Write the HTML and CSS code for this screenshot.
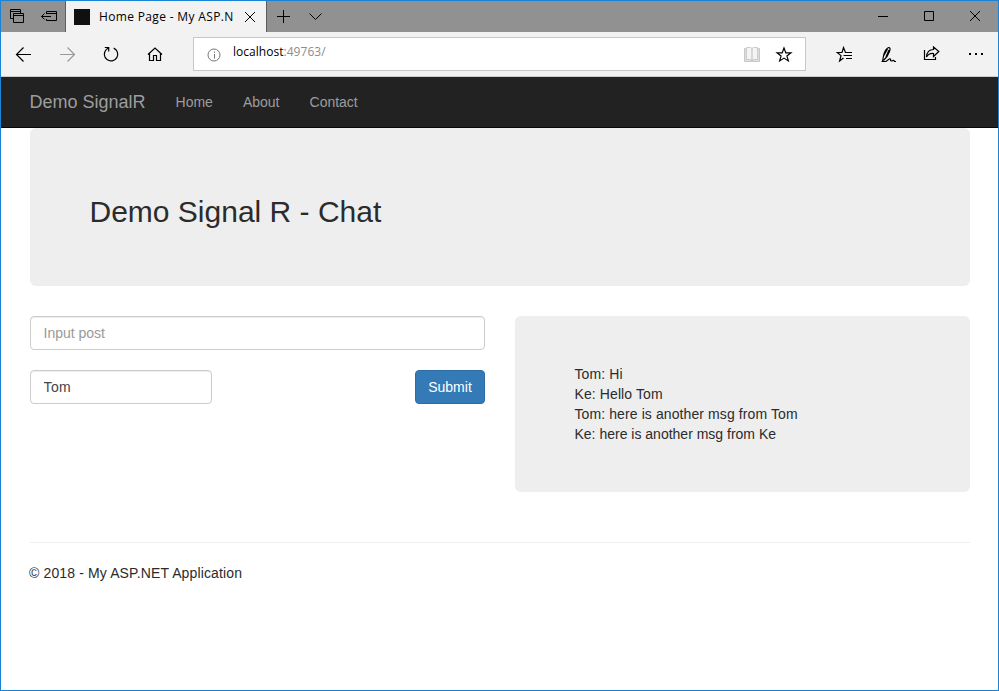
FILE: index.html
```html
<!DOCTYPE html>
<html lang="en">
<head>
<meta charset="utf-8">
<title>Home Page - My ASP.NET Application</title>
<link rel="stylesheet" href="styles.css">
</head>
<body>
<div class="window">
  <div class="titlebar">
    <div class="cell-small"><svg width="32" height="31" viewBox="1 1 32 31"><path d="M13 18.500H10.500V9.500H20.500V13M10.500 11.500H20.500M13.500 13.500H23.500V22.500H13.500ZM13.500 15.500H23.500"/></svg></div>
    <div class="cell-small"><svg width="32" height="31" viewBox="33 1 32 31"><path d="M46.500 14V11.500H56.500V20.500H46.500V19M46.500 13.500H56.500M41.500 16.500H51M44.500 13.500L41.500 16.500L44.500 19.500"/></svg></div>
    <div class="tab">
      <span class="favicon"></span>
      <span class="tab-title">Home Page - My ASP.N</span>
      <svg class="tab-close" width="12" height="12" viewBox="244 10 12 12"><path d="M245 11L255 21M255 11L245 21"/></svg>
    </div>
    <div class="cell-small"><svg width="32" height="31" viewBox="267 1 32 31"><path d="M277 16.500H290M283.500 10V23"/></svg></div>
    <div class="cell-small"><svg width="32" height="31" viewBox="299 1 32 31"><path d="M309.500 13.500L315.500 19.500L321.500 13.500"/></svg></div>
    <div class="caption-buttons">
      <svg width="46" height="31" viewBox="860 1 46 31"><path d="M878 16.500H888"/></svg>
      <svg width="46" height="31" viewBox="906 1 46 31"><path d="M924.500 11.500H933.500V20.500H924.500Z"/></svg>
      <svg width="46" height="31" viewBox="952 1 46 31"><path d="M970 11L980 21M980 11L970 21"/></svg>
    </div>
  </div>

  <div class="toolbar">
    <svg class="bold" width="44" height="44" viewBox="2 32 44 44"><path d="M16.500 54.500H31M23.500 47.500L16.500 54.500L23.500 61.500"/></svg>
    <svg class="bold dim" width="44" height="44" viewBox="46 32 44 44"><path d="M60 54.500H74.500M67.500 47.500L74.500 54.500L67.500 61.500"/></svg>
    <svg class="bold" width="44" height="44" viewBox="90 32 44 44"><path d="M113.700 48.100A6.700 6.700 0 1 1 106.200 49.600L108.500 47.800M104.800 47.500H108.700V51.500"/></svg>
    <svg class="bold" width="44" height="44" viewBox="134 32 44 44"><path d="M148 54.500L155 48L162 54.500M149.500 53.500V60.500H153.500V55.500H156.500V60.500H160.500V53.500"/></svg>
    <div class="address">
      <svg class="info" width="14" height="14" viewBox="207 48 14 14"><circle cx="214" cy="55" r="6"/><path d="M214.500 54V58.500M214.500 51.500V53"/></svg>
      <span class="url">localhost<span class="port">:49763/</span></span>
      <svg class="book" width="18" height="18" viewBox="743 46 18 18"><path class="cover" d="M744.500 48.500H759.500V61.500H744.500Z"/><path class="leaf" d="M746.500 47.500H750.500L752 48.500L753.500 47.500H757.500V59.500H753.500L752 60.500L750.500 59.500H746.500Z"/><path d="M752 48.500V60.500"/></svg>
      <svg class="star" width="18" height="18" viewBox="775 46 18 18"><path d="M784 48L785.800 52.800H791L786.900 56L788.400 61L784 58.100L779.600 61L781.100 56L777 52.800H782.200Z"/></svg>
    </div>
    <div class="tools">
      <svg class="bold" width="44" height="44" viewBox="822 32 44 44"><path d="M847.500 52.500H845.500L843.500 47.500L842 52.500H837.300L841 55.600L839.600 61L843.500 58M845 52.500H852M843.500 55.500H852M846 58.500H852"/></svg>
      <svg class="bold" width="44" height="44" viewBox="866 32 44 44"><path d="M882.500 61.500L883.500 56Q885 49 888.500 47.500Q891 47.500 889.500 51.500Q887.500 57 883.500 60.500M883.500 56L887.500 49M886 57L889 50M881.500 61.500H886L889.500 58.800Q891 58.500 890.500 60.500Q891 61.500 893 60.500Q894 60 894.500 61.500H896"/></svg>
      <svg class="bold" width="44" height="44" viewBox="910 32 44 44"><path d="M924.500 50V59.500H935.500V57M933.500 47L938.800 51.500L933.500 56.500V53.500Q929 53 926.500 57Q927 49.500 933.500 49.500Z"/></svg>
      <svg width="44" height="44" viewBox="954 32 44 44"><path class="dots" d="M969 53H971V55H969ZM975 53H977V55H975ZM981 53H983V55H981Z"/></svg>
    </div>
  </div>

  <nav class="navbar">
    <a class="brand">Demo SignalR</a>
    <a class="link">Home</a>
    <a class="link">About</a>
    <a class="link">Contact</a>
  </nav>

  <main class="container">
    <header class="jumbotron hero"><h2>Demo Signal R - Chat</h2></header>
    <div class="row">
      <form class="post-form">
        <input class="control" type="text" placeholder="Input post">
        <div class="form-row">
          <input class="control name" type="text" value="Tom">
          <button class="submit" type="button">Submit</button>
        </div>
      </form>
      <section class="jumbotron messages">
        <div class="own">Tom: Hi</div>
        <div class="own">Ke: Hello Tom</div>
        <div class="own">Tom: here is another msg from Tom</div>
        <div>Ke: here is another msg from Ke</div>
      </section>
    </div>
    <hr>
    <footer>© 2018 - My ASP.NET Application</footer>
  </main>
</div>
</body>
</html>
```
FILE: styles.css
```css
* { box-sizing: border-box; }
body {
  margin: 0;
  font: 14px/20px "Liberation Sans", Arial, sans-serif;
  color: #2b2b2b;
  background: #fff;
}
.window {
  height: 691px;
  border: 1px solid #1883d7;
  overflow: hidden;
}
svg {
  display: block;
  flex: none;
  fill: none;
  stroke: #000;
  stroke-width: 1;
}
.bold { stroke-width: 1.2; }

.titlebar {
  display: flex;
  height: 31px;
  background: #919191;
}
.cell-small { width: 32px; }
.tab {
  display: flex;
  align-items: center;
  width: 202px;
  padding-left: 8px;
  background: #f2f2f2;
  border: solid #5d5d5d;
  border-width: 0 1px;
}
.favicon { width: 16px; height: 16px; background: #101010; }
.tab-title {
  width: 145px;
  margin-left: 9px;
  font: 12px/16px "Open Sans", sans-serif;
  letter-spacing: 0.34px;
  color: #000;
  white-space: nowrap;
}
.caption-buttons { display: flex; margin-left: auto; }

.toolbar {
  display: flex;
  height: 45px;
  padding-left: 1px;
  background: #f2f2f2;
  border-bottom: 1px solid #ccc;
}
.dim { stroke: #999; }
.address {
  display: flex;
  width: 613px;
  height: 34px;
  margin: 5px 0 0 15px;
  background: #fff;
  border: 1px solid #c8c8c8;
}
.info { margin: 10px 12px 0 13px; stroke: #777; }
.url {
  flex: 1;
  margin-top: 6px;
  font: 12px/16px "Open Sans", sans-serif;
  letter-spacing: 0.03px;
  color: #000;
}
.port { color: #8c8c8c; }
.book { margin: 8px 14px 0 0; stroke: #bbb; }
.cover { fill: #ddd; stroke: #c8c8c8; }
.leaf { fill: #f4f4f4; stroke: #ccc; }
.star { margin: 8px 12px 0 0; stroke-width: 1.15; }
.tools { display: flex; margin-left: auto; }
.dots { fill: #000; stroke: none; }

.navbar {
  display: flex;
  align-items: center;
  height: 51px;
  padding-left: 28.5px;
  background: #222;
  border-bottom: 1px solid #080808;
  color: #9d9d9d;
}
.brand { margin-right: 15px; font-size: 18px; }
.link { padding: 0 15px; }

.container { padding: 0 28px 0 29px; }
.jumbotron { background: #eee; border-radius: 6px; }
.hero {
  height: 158px;
  margin-bottom: 30px;
  padding: 67px 59.5px 0;
}
h2 { margin: 0; font-size: 30px; font-weight: 500; line-height: 33px; }
.row { display: flex; gap: 30px; }
.post-form { width: 455px; }
.control {
  display: block;
  width: 100%;
  height: 34px;
  padding: 6px 12.5px;
  font: inherit;
  color: #555;
  background: #fff;
  border: 1px solid #ccc;
  border-radius: 4px;
  box-shadow: inset 0 1px 1px rgba(0, 0, 0, 0.075);
}
.control::placeholder { color: #999; opacity: 1; }
.form-row {
  display: flex;
  justify-content: space-between;
  margin-top: 20px;
}
.name { width: 182px; color: #444; letter-spacing: 0.4px; }
.submit {
  width: 70px;
  height: 34px;
  padding: 0;
  font: inherit;
  color: #fff;
  background: #337ab7;
  border: 1px solid #2e6da4;
  border-radius: 4px;
}
.messages {
  flex: 1;
  height: 176px;
  padding: 48px 59.5px;
}
.own { letter-spacing: 0.1px; }
hr {
  margin: 50px 0 20px;
  border: 0;
  border-top: 1px solid #eee;
}
footer { margin-left: -1px; letter-spacing: 0.13px; }
```
